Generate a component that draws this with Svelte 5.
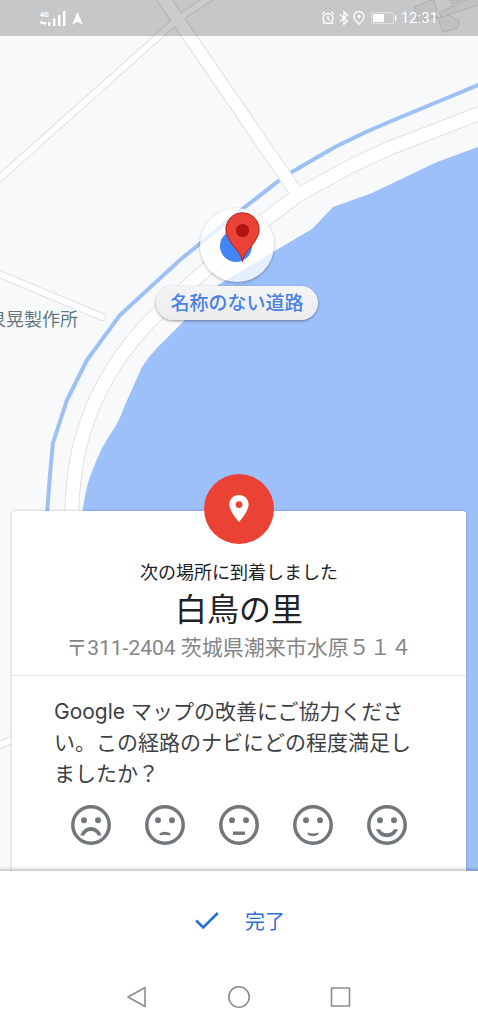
<script lang="ts">
  const ratings = [
    {
      label: "とても不満",
      mouth: "M9.3 30.5C11 25.5 15 22 20 22s9 3.5 10.7 8.5h-4C25.5 27.5 23 26 20 26s-5.5 1.5-6.7 4.5z",
    },
    { label: "不満", mouth: "M14.6 28.2Q20 25.2 25.4 28.2V30.6Q20 28.8 14.6 30.6z" },
    { label: "普通", mouth: "M14 26.5h12v3.4H14z" },
    { label: "満足", mouth: "M14.6 27.4Q20 29.6 25.4 27.4V29.6Q20 32.8 14.6 29.6z" },
    {
      label: "とても満足",
      mouth: "M9 24.3h4c1.3 2.7 4 4 7 4s5.7-1.3 7-4h4c-2 5-6 8-11 8s-9-3-11-8z",
    },
  ];

  const shoreRoad = "M500 105L478 114L390 148L353 165L298 195L265 220L200 275L160 311Q132 338 113 368Q99 391 91 411Q80 440 77 460Q72 485 71 530";
  const branchRoad = "M160 -7L178 20L298 195";
  const sideRoads = ["M-6 183L178 19L214 -5", "M-6 748L20 736"];
  const river = "M500 76L478 85L401 117L368 131L335 147L285 176L240 211L180 260L120 315L87 360L67 400L53 443Q50 470 46 530";
  const water = "M500 141L478 147L437 162L372 193Q350 201 333 207L312 229L273 252L218 285L180 325L157 348Q148 357 142 367L125 405Q120 419 115 427Q108 437 102 448Q92 470 88 483Q84 497 80 530V900H500z";

  let selected = $state(-1);
</script>

<main class="screen">
  <svg class="map" viewBox="0 0 478 872" preserveAspectRatio="xMidYMin slice">
    <path class="water" d={water} />
    <path class="river" d={river} />
    <g class="casing">
      {#each sideRoads as d}
        <path class="narrow" {d} />
      {/each}
      <path class="narrow" d="M-6 272L102 317" stroke-linecap="round" />
      <path d={branchRoad} />
      <path class="wide" d={shoreRoad} />
    </g>
    <g class="road">
      {#each sideRoads as d}
        <path class="narrow" {d} />
      {/each}
      <path class="narrow" d="M-6 272L102 317" stroke-linecap="round" />
      <path d={branchRoad} />
      <path class="wide" d={shoreRoad} />
    </g>
    <g class="building">
      <path d="M414 7L431 0H434L437 11L431 14L434 19L448 15L459 21L458 28L443 32L437 16L418 22z" />
      <path d="M439 13L472 -3H490V1L442 17z" />
      <path d="M450 0L452 4L462 0z" />
    </g>
    <text class="place" x="-12" y="326">泉晃製作所</text>
  </svg>

  <header class="status">
    <div class="status-group">
      <svg width="44" height="18" viewBox="0 0 44 18" fill="#fff">
        <text class="network" x="0" y="8">4G</text>
        <path d="M0 13l2-1.5V13h4v1H0zM6 15l-2 1.5V15H1v-1h5z" />
        <path d="M8 13h2.4v4H8zM13 9.500h2.400V17H13zM18 6h2.400v11H18zM23 2h2.400v15H23z" />
        <path d="M37.500 3l5.500 13-5.500-3.500L32 16z" />
      </svg>
    </div>
    <div class="status-group">
      <svg width="14" height="16" viewBox="0 0 14 16" fill="none" stroke="#fff" stroke-width="1.3">
        <circle cx="7" cy="8.500" r="5" />
        <path d="M7 5.500v3.300l2.300 1.400M.8 4.300l3-2.600M13.200 4.300l-3-2.600M3.500 12.500L2 14M10.500 12.500L12 14" />
      </svg>
      <svg width="10" height="16" viewBox="0 0 10 16" fill="none" stroke="#fff" stroke-width="1.300">
        <path d="M1 4.500l7.500 6.500L5 14.300V1.700L8.500 5 1 11.500" />
      </svg>
      <svg width="12" height="16" viewBox="0 0 12 16" fill="none" stroke="#fff" stroke-width="1.300">
        <path d="M6 14.300Q1 9.500 1 6.500a5 5 0 0 1 10 0Q11 9.500 6 14.300z" />
        <circle cx="6" cy="6.500" r="1" fill="#fff" />
      </svg>
      <svg class="battery" width="26" height="16" viewBox="0 0 26 16">
        <rect x=".6" y="2.600" width="22" height="11" rx="1.500" fill="none" stroke="#e4e4e5" />
        <path d="M2 4h11v8H2zM24 5.500h1.500v5H24z" fill="#fff" />
      </svg>
      <span>12:31</span>
    </div>
  </header>

  <div class="position">
    <div class="puck">
      <svg width="74" height="74" viewBox="0 0 74 74">
        <circle cx="36" cy="38" r="16" fill="#4285f4" />
        <path
          d="M42.500 53.500C41 44 34 41 28.500 30.500A16.700 16.700 0 1 1 56.500 30.500C51 41 44 44 42.500 53.500z"
          fill="#ea4335"
          stroke="#b3201a"
        />
        <circle cx="42.500" cy="22.500" r="6.600" fill="#b31412" />
      </svg>
    </div>
    <div class="street">名称のない道路</div>
  </div>

  <section class="card">
    <div class="badge">
      <svg width="20" height="28" viewBox="0 0 20 28">
        <path
          d="M10 0C4.500 0 .4 4.200.4 9.600.4 16.500 10 27 10 27s9.600-10.500 9.600-17.400C19.600 4.200 15.500 0 10 0zm0 6.200a3.400 3.400 0 1 1 0 6.800 3.400 3.400 0 0 1 0-6.800z"
          fill="#fff"
          fill-rule="evenodd"
        />
      </svg>
    </div>
    <div class="arrival">
      <p class="notice">次の場所に到着しました</p>
      <h1>白鳥の里</h1>
      <p class="address">〒311-2404 茨城県潮来市水原５１４</p>
    </div>
    <div class="survey">
      <p class="question">
        Google マップの改善にご協力ください。この経路のナビにどの程度満足しましたか？
      </p>
      <div class="faces">
        {#each ratings as rating, i}
          <button
            class="face"
            class:selected={selected === i}
            aria-label={rating.label}
            aria-pressed={selected === i}
            onclick={() => (selected = i)}
          >
            <svg width="40" height="40" viewBox="0 0 40 40" fill="currentColor">
              <circle cx="20" cy="20" r="18.200" fill="none" stroke="currentColor" stroke-width="3.500" />
              <circle cx="13" cy="15.300" r="3" />
              <circle cx="27" cy="15.300" r="3" />
              <path d={rating.mouth} />
            </svg>
          </button>
        {/each}
      </div>
    </div>
  </section>

  <footer class="sheet">
    <button class="done">
      <svg width="24" height="20" viewBox="0 0 24 20" fill="none" stroke="currentColor" stroke-width="2.600">
        <path d="M1.200 10.500l7 7L22.800 3" />
      </svg>
      完了
    </button>
    <nav class="keys">
      <button aria-label="戻る">
        <svg width="24" height="24" viewBox="0 0 24 24"><path d="M20 2.500v19L3 12z" /></svg>
      </button>
      <button aria-label="ホーム">
        <svg width="24" height="24" viewBox="0 0 24 24"><circle cx="12" cy="12" r="10.200" /></svg>
      </button>
      <button aria-label="アプリ履歴">
        <svg width="24" height="24" viewBox="0 0 24 24"><path d="M2.500 3h18v18h-18z" /></svg>
      </button>
    </nav>
  </footer>
</main>

<style>
  :global(body) {
    margin: 0;
    background: #f8f9fb;
  }

  .screen {
    position: relative;
    display: flex;
    flex-direction: column;
    min-height: 100vh;
    overflow: hidden;
    font-family: Roboto, "Noto Sans CJK JP", sans-serif;
  }

  button {
    display: flex;
    align-items: center;
    justify-content: center;
    padding: 0;
    border: 0;
    background: none;
    font: inherit;
    cursor: pointer;
  }

  svg {
    display: block;
  }

  .map {
    position: absolute;
    top: 0;
    left: 0;
    width: 100%;
    height: calc(100% - 152px);
    background: #f7f9fb;
  }

  .water {
    fill: #9dc0fa;
  }

  .river {
    fill: none;
    stroke: #9dc0f5;
    stroke-width: 4;
  }

  .casing path,
  .road path {
    fill: none;
    stroke-linejoin: round;
  }

  .casing path {
    stroke: #dfe1e3;
    stroke-width: 14px;
  }

  .casing .wide {
    stroke-width: 15px;
  }

  .casing .narrow {
    stroke-width: 8px;
  }

  .road path {
    stroke: #fff;
    stroke-width: 12px;
  }

  .road .wide {
    stroke-width: 13px;
  }

  .road .narrow {
    stroke-width: 6px;
  }

  .building path {
    fill: #f0f1f2;
    stroke: #d9dadc;
  }

  .place {
    font-size: 18px;
    fill: #5f7681;
    stroke: #fff;
    stroke-width: 2px;
    paint-order: stroke;
  }

  .status {
    position: relative;
    display: flex;
    align-items: center;
    justify-content: space-between;
    height: 36px;
    padding: 0 40px;
    background: rgba(0, 0, 0, 0.2);
    color: #fff;
    font-size: 15px;
  }

  .status-group {
    display: flex;
    align-items: center;
    gap: 4px;
  }

  .network {
    font-size: 7px;
    font-weight: 700;
  }

  .battery {
    margin-left: 2px;
  }

  .position {
    position: absolute;
    top: 208px;
    left: 0;
    right: 4px;
    display: flex;
    flex-direction: column;
    align-items: center;
    gap: 4px;
  }

  .puck {
    border-radius: 50%;
    background: rgba(255, 255, 255, 0.75);
    box-shadow: 0 1px 3px rgba(0, 0, 0, 0.3);
  }

  .street {
    padding: 1px 14px 0;
    border-radius: 17px;
    background: linear-gradient(#f4f5f7, #eaebed);
    box-shadow: 0 1px 3px rgba(0, 0, 0, 0.4);
    color: #4a80e0;
    font-size: 19px;
    font-weight: 500;
    line-height: 33px;
  }

  .card {
    position: relative;
    margin: auto 12px 0;
    border-radius: 3px 3px 0 0;
    background: #fff;
    box-shadow: 0 0 3px rgba(0, 0, 0, 0.25);
  }

  .badge {
    display: flex;
    align-items: center;
    justify-content: center;
    width: 70px;
    height: 70px;
    margin: -37px auto 0;
    border-radius: 50%;
    background: #ea4335;
  }

  .arrival {
    padding: 15px 12px 12px;
    border-bottom: 1px solid #e4e5e7;
    text-align: center;
  }

  .notice,
  .address,
  .question,
  h1 {
    margin: 0;
  }

  .notice {
    color: #202124;
    font-size: 18px;
    line-height: 28px;
  }

  h1 {
    color: #202124;
    font-size: 32px;
    font-weight: 400;
    line-height: 46px;
  }

  .address {
    color: #858585;
    font-size: 21px;
    line-height: 30px;
  }

  .survey {
    padding: 20px 42px 26px;
  }

  .question {
    color: #3c4043;
    font-family: Inter, "Noto Sans CJK JP", sans-serif;
    font-size: 21px;
    line-height: 31px;
  }

  .faces {
    display: flex;
    justify-content: space-between;
    padding: 16px 17px 0;
  }

  .face {
    color: #72777b;
  }

  .face.selected {
    color: #1a73e8;
  }

  .sheet {
    position: relative;
    display: flex;
    flex-direction: column;
    background: #fff;
    box-shadow: 0 -1px 3px 1px rgba(0, 0, 0, 0.22);
  }

  .done {
    gap: 26px;
    height: 98px;
    padding: 0 0 0 2px;
    color: #2a70d2;
    font-size: 20px;
  }

  .keys {
    display: flex;
    justify-content: center;
    gap: 78px;
    padding: 16px 0 15px;
  }

  .keys svg {
    fill: none;
    stroke: #8c8c8c;
    stroke-width: 1.6;
    stroke-linejoin: round;
  }
</style>
